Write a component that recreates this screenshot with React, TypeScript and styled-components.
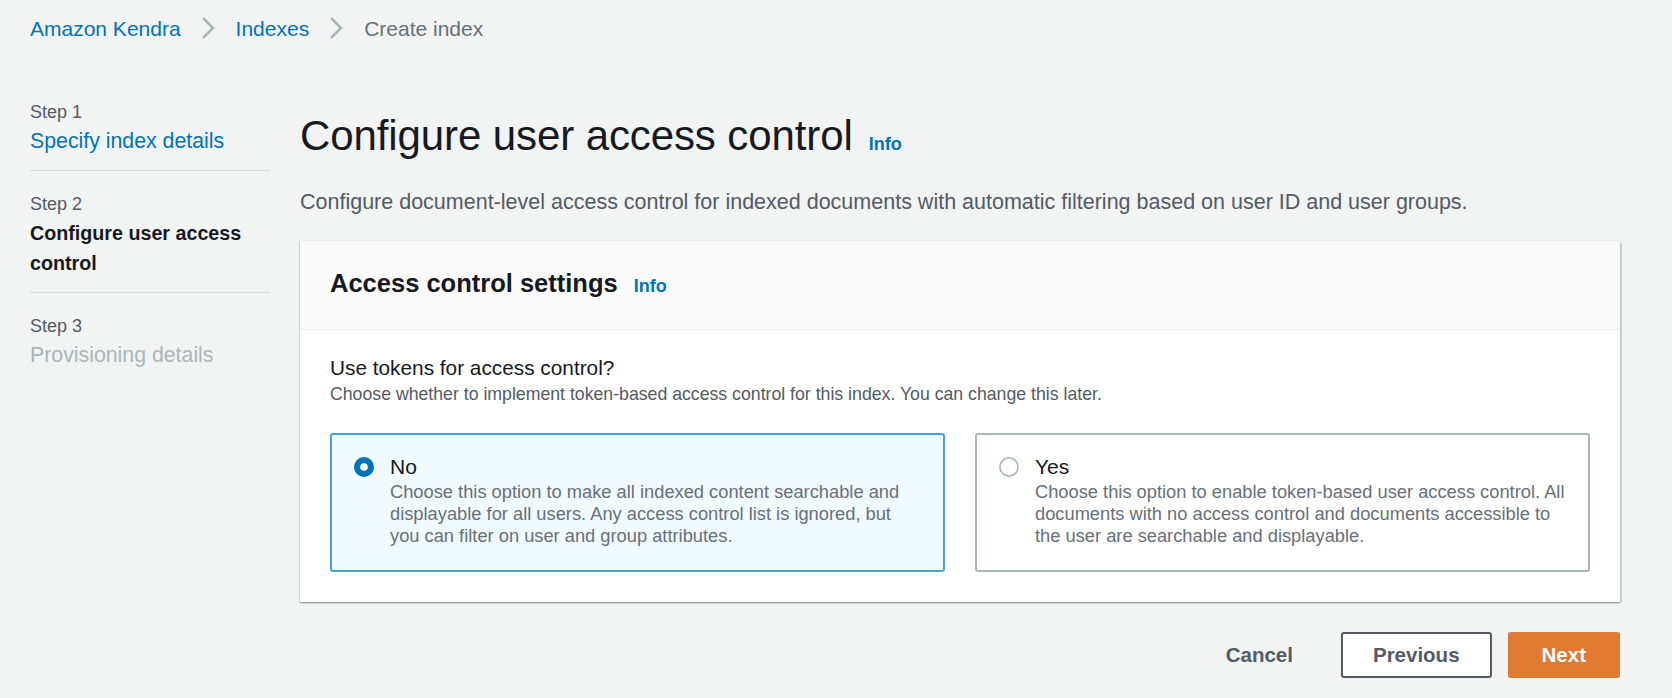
import React from "react";
import styled, { createGlobalStyle } from "styled-components";

const GlobalStyle = createGlobalStyle`
  html, body {
    margin: 0;
    padding: 0;
    background: #f2f3f3;
  }
  body {
    font-family: "Liberation Sans", Arial, sans-serif;
    color: #16191f;
    -webkit-font-smoothing: antialiased;
  }
  * { box-sizing: border-box; }
`;

const Page = styled.div`
  padding: 14px 52px 20px 30px;
  min-height: 698px;
`;

const Breadcrumbs = styled.nav`
  display: flex;
  align-items: center;
  gap: 21px;
  height: 30px;
  font-size: 21px;
  line-height: 30px;
`;

const Crumb = styled.a<{ $current?: boolean }>`
  color: ${(p) => (p.$current ? "#687078" : "#0073bb")};
  text-decoration: none;
  white-space: nowrap;
`;

const Chevron = styled.svg`
  display: block;
  width: 13px;
  height: 22px;
  margin-top: -2px;
`;

const Layout = styled.div`
  display: grid;
  grid-template-columns: 240px 1fr;
  column-gap: 30px;
  margin-top: 35px;
`;

const Steps = styled.ol`
  list-style: none;
  margin: 0;
  padding: 0;
`;

const Step = styled.li`
  padding: 20px 0 14px;
  border-bottom: 1px solid #d5dbdb;
  &:last-child {
    border-bottom: none;
  }
`;

const StepNumber = styled.div`
  font-size: 18px;
  line-height: 27px;
  color: #545b64;
`;

const StepTitle = styled.div<{ $state: "done" | "active" | "todo" }>`
  font-size: ${(p) => (p.$state === "active" ? "19.7px" : "21.3px")};
  line-height: 30px;
  font-weight: ${(p) => (p.$state === "active" ? 700 : 400)};
  color: ${(p) =>
    p.$state === "done" ? "#0073bb" : p.$state === "active" ? "#16191f" : "#aab7b8"};
`;

const Content = styled.main`
  padding-top: 32px;
`;

const TitleRow = styled.div`
  display: flex;
  align-items: baseline;
  gap: 16px;
`;

const H1 = styled.h1`
  margin: 0;
  font-size: 42px;
  line-height: 50px;
  font-weight: 400;
  color: #16191f;
  letter-spacing: -0.1px;
`;

const InfoLink = styled.a`
  font-size: 18px;
  font-weight: 700;
  color: #0073bb;
  text-decoration: none;
`;

const PageDescription = styled.p`
  margin: 26px 0 0;
  font-size: 21.5px;
  line-height: 30px;
  color: #545b64;
`;

const Card = styled.section`
  margin-top: 23px;
  background: #ffffff;
  border-top: 1px solid #eaeded;
  box-shadow: 0 1.5px 1.5px 0 rgba(0, 28, 36, 0.3),
    1.5px 1px 1px 0 rgba(0, 28, 36, 0.15),
    -1.5px 1px 1px 0 rgba(0, 28, 36, 0.15);
`;

const CardHeader = styled.header`
  display: flex;
  align-items: baseline;
  gap: 16px;
  padding: 26px 30px 29px;
  background: #fafafa;
  border-bottom: 1px solid #eaeded;
`;

const H2 = styled.h2`
  margin: 0;
  font-size: 25.5px;
  line-height: 33px;
  font-weight: 700;
  color: #16191f;
`;

const CardBody = styled.div`
  padding: 23px 30px 30px;
`;

const FieldLabel = styled.div`
  font-size: 20.8px;
  line-height: 29px;
  color: #16191f;
`;

const FieldDescription = styled.div`
  font-size: 17.7px;
  line-height: 24px;
  color: #545b64;
`;

const Tiles = styled.div`
  display: grid;
  grid-template-columns: 1fr 1fr;
  gap: 30px;
  margin-top: 27px;
`;

const Tile = styled.label<{ $selected?: boolean }>`
  display: flex;
  gap: 16px;
  padding: 17px 19px 23px 22px;
  border: 2px solid ${(p) => (p.$selected ? "#44a5d3" : "#aab7b8")};
  border-radius: 3px;
  background: ${(p) => (p.$selected ? "#f1faff" : "#ffffff")};
  cursor: pointer;
`;

const RadioIcon = styled.svg`
  flex: none;
  width: 20px;
  height: 20px;
  margin-top: 4.5px;
`;

const TileText = styled.div`
  flex: 1;
  min-width: 0;
`;

const TileLabel = styled.div`
  font-size: 21px;
  line-height: 29px;
  color: #16191f;
`;

const TileDescription = styled.div`
  font-size: 18.3px;
  line-height: 22px;
  color: #687078;
`;

const Actions = styled.div`
  display: flex;
  justify-content: flex-end;
  align-items: center;
  gap: 16px;
  margin-top: 30px;
`;

const Button = styled.button<{ $variant: "link" | "normal" | "primary" }>`
  height: 46px;
  padding: 0 ${(p) => (p.$variant === "primary" ? "32px" : "30px")};
  border-radius: 3px;
  font-family: "Liberation Sans", Arial, sans-serif;
  font-size: 20.5px;
  font-weight: 700;
  cursor: pointer;
  border: 2px solid
    ${(p) =>
      p.$variant === "normal" ? "#545b64" : p.$variant === "primary" ? "#e07a33" : "transparent"};
  background: ${(p) =>
    p.$variant === "normal" ? "#ffffff" : p.$variant === "primary" ? "#e07a33" : "transparent"};
  color: ${(p) => (p.$variant === "primary" ? "#ffffff" : "#545b64")};
`;

const Radio = ({ checked }: { checked: boolean }) => (
  <RadioIcon viewBox="0 0 20 20" aria-hidden="true">
    {checked ? (
      <>
        <circle cx="10" cy="10" r="10" fill="#0073bb" />
        <circle cx="10" cy="10" r="3.8" fill="#ffffff" />
      </>
    ) : (
      <circle cx="10" cy="10" r="9.1" fill="#ffffff" stroke="#aab7b8" strokeWidth="1.6" />
    )}
  </RadioIcon>
);

const ChevronIcon = () => (
  <Chevron viewBox="0 0 13 22" aria-hidden="true">
    <polyline
      points="2,2 11,11 2,20"
      fill="none"
      stroke="#aab7b8"
      strokeWidth="2.6"
      strokeLinecap="square"
      strokeLinejoin="miter"
    />
  </Chevron>
);

export default function App() {
  return (
    <>
      <GlobalStyle />
      <Page>
        <Breadcrumbs>
          <Crumb href="#">Amazon Kendra</Crumb>
          <ChevronIcon />
          <Crumb href="#">Indexes</Crumb>
          <ChevronIcon />
          <Crumb $current>Create index</Crumb>
        </Breadcrumbs>

        <Layout>
          <Steps>
            <Step>
              <StepNumber>Step 1</StepNumber>
              <StepTitle $state="done">Specify index details</StepTitle>
            </Step>
            <Step>
              <StepNumber>Step 2</StepNumber>
              <StepTitle $state="active">Configure user access control</StepTitle>
            </Step>
            <Step>
              <StepNumber>Step 3</StepNumber>
              <StepTitle $state="todo">Provisioning details</StepTitle>
            </Step>
          </Steps>

          <Content>
            <TitleRow>
              <H1>Configure user access control</H1>
              <InfoLink href="#">Info</InfoLink>
            </TitleRow>
            <PageDescription>
              Configure document-level access control for indexed documents with automatic
              filtering based on user ID and user groups.
            </PageDescription>

            <Card>
              <CardHeader>
                <H2>Access control settings</H2>
                <InfoLink href="#">Info</InfoLink>
              </CardHeader>
              <CardBody>
                <FieldLabel>Use tokens for access control?</FieldLabel>
                <FieldDescription>
                  Choose whether to implement token-based access control for this index. You can
                  change this later.
                </FieldDescription>
                <Tiles>
                  <Tile $selected>
                    <Radio checked />
                    <TileText>
                      <TileLabel>No</TileLabel>
                      <TileDescription>
                        Choose this option to make all indexed content searchable and displayable
                        for all users. Any access control list is ignored, but you can filter on
                        user and group attributes.
                      </TileDescription>
                    </TileText>
                  </Tile>
                  <Tile>
                    <Radio checked={false} />
                    <TileText>
                      <TileLabel>Yes</TileLabel>
                      <TileDescription>
                        Choose this option to enable token-based user access control. All
                        documents with no access control and documents accessible to the user are
                        searchable and displayable.
                      </TileDescription>
                    </TileText>
                  </Tile>
                </Tiles>
              </CardBody>
            </Card>

            <Actions>
              <Button $variant="link">Cancel</Button>
              <Button $variant="normal">Previous</Button>
              <Button $variant="primary">Next</Button>
            </Actions>
          </Content>
        </Layout>
      </Page>
    </>
  );
}
